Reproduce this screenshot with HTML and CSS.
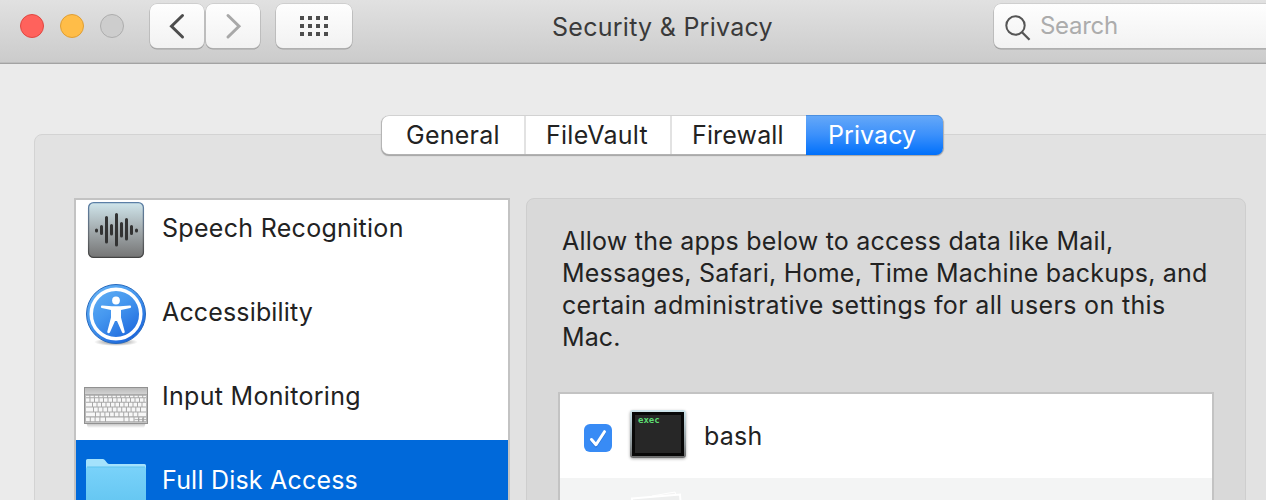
FILE: index.html
```
<!DOCTYPE html>
<html lang="en">
<head>
<meta charset="utf-8">
<title>Security &amp; Privacy</title>
<link rel="stylesheet" href="styles.css">
</head>
<body>
<div class="window">
  <header class="titlebar">
    <div class="lights"><span class="light close"></span><span class="light minimize"></span><span class="light zoom"></span></div>
    <div class="nav">
      <button class="tool back" aria-label="Back"><svg width="54" height="44" viewBox="0 0 54 44"><path d="M32.500 11.500 21.500 22.200 32.500 33" fill="none" stroke="#4d4d4d" stroke-width="3" stroke-linecap="round" stroke-linejoin="miter"/></svg></button>
      <button class="tool forward" aria-label="Forward"><svg width="54" height="44" viewBox="0 0 54 44"><path d="M22 11.500 33 22.200 22 33" fill="none" stroke="#a8a8a8" stroke-width="3" stroke-linecap="round" stroke-linejoin="miter"/></svg></button>
    </div>
    <button class="tool grid" aria-label="Show all">
      <svg width="28" height="20" viewBox="0 0 28 20" fill="#4d4d4d" shape-rendering="crispEdges"><path d="M0 0h4v4H0zM8 0h4v4H8zM16 0h4v4h-4zM24 0h4v4h-4zM0 8h4v4H0zM8 8h4v4H8zM16 8h4v4h-4zM24 8h4v4h-4zM0 16h4v4H0zM8 16h4v4H8zM16 16h4v4h-4zM24 16h4v4h-4z"/></svg>
    </button>
    <h1 class="title">Security &amp; Privacy</h1>
    <div class="search">
      <svg width="26" height="27" viewBox="0 0 26 27" fill="none" stroke="#555" stroke-width="2"><circle cx="10.500" cy="10.500" r="9.200"/><path d="M17 17.200 24.500 24.700" stroke-width="2.300"/></svg>
      <span class="placeholder">Search</span>
    </div>
  </header>
  <nav class="tabs">
    <span class="tab general">General</span><span class="tab filevault">FileVault</span><span class="tab firewall">Firewall</span><span class="tab active">Privacy</span>
  </nav>
  <main class="pane">
    <ul class="services">
      <li class="service">
        <svg class="icon" width="64" height="64" viewBox="0 0 64 64">
          <defs><linearGradient id="speech" x2="0" y2="1"><stop stop-color="#cfe5eb"/><stop offset=".5" stop-color="#a3abae"/><stop offset="1" stop-color="#757575"/></linearGradient><linearGradient id="speech-edge" x2="0" y2="1"><stop stop-color="#5b7fa6"/><stop offset=".6" stop-color="#666b70"/><stop offset="1" stop-color="#444"/></linearGradient></defs>
          <rect x="4.500" y="5" width="55" height="55" rx="5" fill="#0002"/>
          <rect x="4.600" y="4.600" width="54.800" height="54.800" rx="5" fill="url(#speech)" stroke="url(#speech-edge)" stroke-width="1.300"/>
          <path d="M12.500 32v1M17.500 28.500v7M22.500 19.500v24.500M27.500 27.500v8.500M32.500 16.500v30.500M37.500 25.500v12.500M42.500 21.500v19.500M47.500 28.500v7M52.500 32v1" stroke="#333" stroke-width="3" stroke-linecap="round"/>
        </svg>
        <span class="label speech">Speech Recognition</span>
      </li>
      <li class="service">
        <svg class="icon" width="64" height="64" viewBox="0 0 64 64">
          <defs><linearGradient id="access" x2=".7" y2="1"><stop stop-color="#69b6f5"/><stop offset=".5" stop-color="#4597ef"/><stop offset="1" stop-color="#1c66dc"/></linearGradient><radialGradient id="access-shadow"><stop stop-color="#0008"/><stop offset="1" stop-color="#0000"/></radialGradient></defs>
          <ellipse cx="32" cy="60" rx="22" ry="4" fill="url(#access-shadow)"/>
          <circle cx="32" cy="32" r="29.500" fill="url(#access)" stroke="#2869bd"/>
          <circle cx="32" cy="32" r="24.800" fill="none" stroke="#fff" stroke-width="3.500"/>
          <circle cx="32" cy="18.500" r="3.900" fill="#fff"/>
          <path d="M18 23.500 28 24.200h8l10-.7c1.300 0 1.600 2.300.2 2.600L37 28.100v7.400l3.700 14c.4 1.700-1.900 2.400-2.700.8L33 39h-2l-5 11.300c-.8 1.600-3.100.9-2.700-.8l3.700-14v-7.400l-9.200-2c-1.400-.3-1.100-2.600.2-2.600z" fill="#fff"/>
        </svg>
        <span class="label accessibility">Accessibility</span>
      </li>
      <li class="service">
        <svg class="icon keyboard" width="64" height="64" viewBox="0 0 64 64">
          <defs><linearGradient id="board" x2="0" y2="1"><stop stop-color="#b8b8b8"/><stop offset=".18" stop-color="#d2d2d2"/><stop offset="1" stop-color="#c2c2c2"/></linearGradient><linearGradient id="board-shadow" x2="0" y2="1"><stop stop-color="#0005"/><stop offset="1" stop-color="#0000"/></linearGradient></defs>
          <path d="M2 54h60l-2 6H4z" fill="url(#board-shadow)"/>
          <rect x=".5" y="19.500" width="63" height="36" fill="url(#board)" stroke="#919191"/>
          <path d="M1 26.500h62" stroke="#aaa"/>
          <rect x="1.500" y="27" width="61" height="27" fill="#a8a8a8"/>
          <g stroke="#f7f7f7" fill="none">
            <path d="M2 28.500h60" stroke-width="1.500" stroke-dasharray="3.400 1"/>
            <path d="M2 32h60" stroke-width="3.500" stroke-dasharray="3.500 1"/>
            <path d="M2 36.700h60" stroke-width="3.800" stroke-dasharray="6 1 3.500 1 3.500 1 3.500 1 3.500 1 3.500 1 3.500 1 3.500 1 3.500 1 3.500 1 3.500 1 3.500 1"/>
            <path d="M2 41.500h60" stroke-width="3.800" stroke-dasharray="7 1 3.700 1 3.700 1 3.700 1 3.700 1 3.700 1 3.700 1 3.700 1 3.700 1 3.700 1 3.700 1 7 1"/>
            <path d="M2 46.400h60" stroke-width="3.800" stroke-dasharray="9 1 3.700 1 3.700 1 3.700 1 3.700 1 3.700 1 3.700 1 3.700 1 3.700 1 3.700 1 9 1"/>
            <path d="M2 51.400h60" stroke-width="3.800" stroke-dasharray="3.800 1 3.800 1 3.800 1 4.600 1 17.500 1 4 1 4 1"/>
            <path d="M50.500 51.600h12M54.500 49.500v4.500M58.500 49.500v4.500" stroke="#a0a0a0" stroke-width=".8"/>
          </g>
          <path d="M63.500 20v35.500" stroke="#919191"/>
        </svg>
        <span class="label input">Input Monitoring</span>
      </li>
      <li class="service selected">
        <svg class="icon" width="64" height="64" viewBox="0 0 64 64">
          <defs><linearGradient id="folder" x2="0" y2="1"><stop stop-color="#79d2fa"/><stop offset="1" stop-color="#5fc3ef"/></linearGradient></defs>
          <path d="M2 62V10.500q0-1.500 1.500-1.500h15q1.500 0 2.500 1.300l2.200 2.800q.8.900 2 .9h35.300q1.500 0 1.500 1.500V62z" fill="#a4e2fc"/>
          <path d="M2 64V18.500q0-1.500 1.500-1.500h57q1.500 0 1.500 1.500V64z" fill="url(#folder)"/>
          <path d="M3 17h58" stroke="#5fc3ee"/>
        </svg>
        <span class="label disk">Full Disk Access</span>
      </li>
    </ul>
    <section class="detail">
      <p class="hint"><span class="l1">Allow the apps below to access data like Mail,</span><br><span class="l2">Messages, Safari, Home, Time Machine backups, and</span><br><span class="l3">certain administrative settings for all users on this</span><br><span class="l4">Mac.</span></p>
      <div class="apps">
        <div class="app">
          <span class="check"><svg width="28" height="28" viewBox="0 0 28 28" fill="none" stroke-width="3" stroke-linecap="round" stroke-linejoin="round"><path d="M7.500 16.500 12 22 20.500 9" stroke="#1d62c080"/><path d="M7.500 15.500 12 20.700 20.500 7.700" stroke="#fff"/></svg></span>
          <span class="terminal"><span class="screen">exec</span></span>
          <span class="app-name">bash</span>
        </div>
        <div class="app alternate">
          <svg class="papers" width="56" height="30" viewBox="0 0 56 30"><path d="m22 5 23-4 2 8v21H22z" fill="#f3f3f3" stroke="#fff" stroke-width="1"/><path d="M2 7.500 50 3.500 52 30H3z" fill="#eeefef" stroke="#fff" stroke-width="2"/></svg>
        </div>
      </div>
    </section>
  </main>
</div>
</body>
</html>
```

FILE: styles.css
```
* { box-sizing: border-box; }
body { margin: 0; overflow: hidden; }
.window {
  width: 1266px; height: 500px; overflow: hidden;
  background: #ebebeb; color: #222;
  font: 400 25px/32px Inter, sans-serif;
}
.titlebar {
  display: flex; align-items: flex-start; height: 64px; padding-top: 4px;
  background: linear-gradient(#e1e1e1, #cbcbcb);
  border-bottom: 1px solid #a3a3a3; box-shadow: inset 0 -1px #bdbdbd;
}
.titlebar > * { flex: none; }
.lights { display: flex; gap: 16px; margin: 10px 0 0 20px; width: 130px; }
.light { width: 24px; height: 24px; border-radius: 50%; border: 1px solid; }
.close { background: #ff625c; border-color: #e04741; }
.minimize { background: #ffbd48; border-color: #df9e34; }
.zoom { background: #cdcdcd; border-color: #adadad; }
.nav { display: flex; gap: 2px; }
.tool {
  height: 44px; padding: 0; border: 0; border-radius: 7px;
  display: flex; align-items: center; justify-content: center;
  background: linear-gradient(#fefefe, #f2f2f2);
  box-shadow: 0 0 0 .5px #bdbdbd, 0 1px 0 .5px #a3a3a3;
}
.back, .forward { width: 54px; }
.grid { width: 76px; margin-left: 16px; }
.title { width: 222px; margin: 7px 0 0 200px; font: inherit; letter-spacing: .27px; white-space: nowrap; color: #3a3a3a; }
.search {
  display: flex; height: 44px; width: 290px; margin-left: 220px; padding-left: 11px;
  border-radius: 7px; background: linear-gradient(#fefefe, #f2f2f2);
  box-shadow: 0 0 0 .5px #bdbdbd, 0 1px 0 .5px #a0a0a0;
}
.search svg { margin-top: 11px; }
.placeholder { margin: 6px 0 0 9px; color: #acacac; font-size: 24px; letter-spacing: -.3px; }
.tabs {
  position: relative; z-index: 1; display: flex; width: 561px; height: 38px; margin: 52px 0 0 382px;
  border-radius: 7px; background: #fff; line-height: 38px; white-space: nowrap;
  box-shadow: 0 0 0 .5px #c0c0c0, 0 1px 1px .5px #a5a5a5;
}
.tab { padding-left: 24px; letter-spacing: .26px; }
.general { width: 144px; border-right: 2px solid #e2e2e2; }
.filevault { width: 146px; padding-left: 20px; border-right: 2px solid #e2e2e2; }
.firewall { width: 134px; padding-left: 20px; letter-spacing: .15px; }
.active {
  width: 137px; height: 40px; margin-top: -1px; padding: 1px 0 0 22px; color: #fff; letter-spacing: .08px;
  background: linear-gradient(#67a9f8, #3b90fb 50%, #0070fb); border-radius: 0 7px 7px 0;
  box-shadow: inset 0 1px #4b8fe0;
}
.pane {
  display: flex; align-items: flex-start; gap: 16px; width: 1260px; height: 400px;
  margin: -20px 0 0 34px; padding: 63px 0 0 39px;
  background: #e2e2e2; border: 1px solid #d3d3d3; border-radius: 8px;
}
.services {
  width: 436px; height: 340px; margin: 0; padding: 0; list-style: none; overflow: hidden;
  background: #fff; border: 2px solid #c3c3c3; flex: none;
}
.service { display: flex; align-items: center; height: 84px; padding-left: 8px; white-space: nowrap; }
.service:first-child { margin-top: -12px; }
.icon { flex: none; }
.keyboard { margin-top: 4px; }
.label { margin: -4px 0 0 14px; }
.speech, .input { letter-spacing: .3px; }
.accessibility { letter-spacing: .15px; }
.disk { letter-spacing: .21px; }
.selected { background: #0069da; color: #fff; }
.detail {
  width: 720px; height: 340px; padding: 26px 0 0 31px; flex: none;
  background: #d9d9d9; border: 1px solid #cecece; border-radius: 8px;
}
.hint { margin: 0 0 39px 4px; white-space: nowrap; }
.l1 { letter-spacing: .23px; }
.l2 { letter-spacing: .21px; }
.l3 { letter-spacing: .34px; }
.l4 { letter-spacing: .1px; }
.apps { width: 656px; height: 200px; background: #fff; border: 2px solid #c3c3c3; }
.app { display: flex; align-items: center; height: 84px; padding-left: 24px; }
.alternate { background: #f3f4f4; padding-left: 70px; align-items: flex-start; padding-top: 13px; }
.check { display: block; width: 28px; height: 28px; margin-top: 4px; border-radius: 6px; background: #388bf5; }
.check svg { display: block; }
.terminal {
  width: 56px; height: 48px; margin: -4px 0 0 18px; padding: 2px; border-radius: 3px;
  background: linear-gradient(#cfe6ed, #8e979a 70%, #6d6d6d); box-shadow: 0 1px 3px #0005;
}
.screen {
  display: block; height: 44px; padding: 0 3px; background: #272727; border: 3px solid #080808;
  color: #5ddd73; font: bold 9px/10px "DejaVu Sans Mono", monospace;
}
.app-name { margin: 0 0 0 18px; letter-spacing: .2px; }
```
